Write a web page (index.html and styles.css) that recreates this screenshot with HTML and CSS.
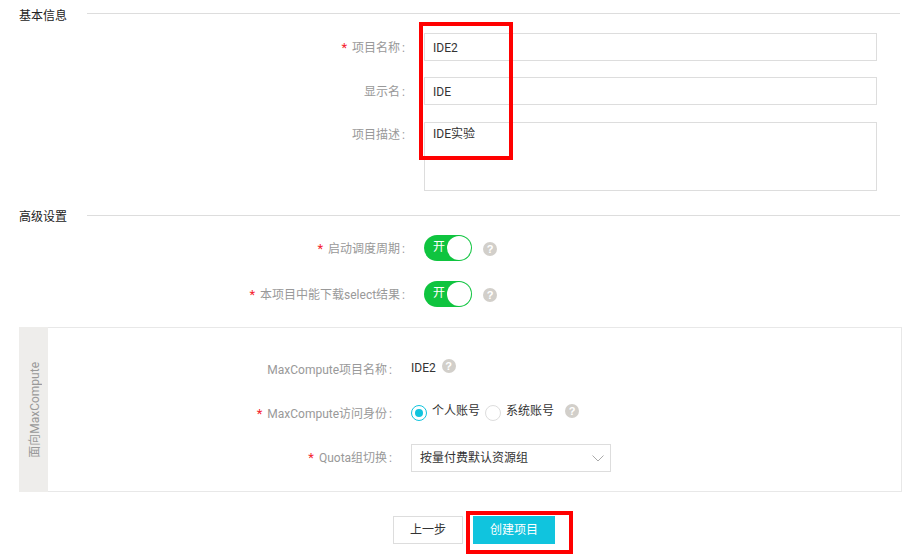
FILE: index.html
```html
<!DOCTYPE html>
<html lang="zh">
<head>
<meta charset="utf-8">
<title>创建项目</title>
<link rel="stylesheet" href="styles.css">
</head>
<body>
<main class="page">
  <div class="section-head first"><h2>基本信息</h2><span class="rule"></span></div>
  <div class="form-row"><label class="label"><i>*</i>项目名称 :</label><div class="input">IDE2</div></div>
  <div class="form-row"><label class="label">显示名 :</label><div class="input">IDE</div></div>
  <div class="form-row top"><label class="label">项目描述 :</label><div class="input area">IDE实验</div></div>

  <div class="section-head second"><h2>高级设置</h2><span class="rule"></span></div>
  <div class="form-row switch-row"><label class="label"><i>*</i>启动调度周期 :</label>
    <div class="switch"><span>开</span><b></b></div>
    <span class="help">?</span></div>
  <div class="form-row switch-row"><label class="label"><i>*</i>本项目中能下载select结果 :</label>
    <div class="switch"><span>开</span><b></b></div>
    <span class="help">?</span></div>

  <section class="panel">
    <div class="panel-side"><span>面向MaxCompute</span></div>
    <div class="panel-body">
      <div class="p-row"><label class="p-label">MaxCompute项目名称 :</label><span class="value">IDE2</span><span class="help small">?</span></div>
      <div class="p-row"><label class="p-label"><i>*</i>MaxCompute访问身份 :</label>
        <span class="radio on"></span><span class="radio-text">个人账号</span>
        <span class="radio"></span><span class="radio-text">系统账号</span>
        <span class="help small far">?</span></div>
      <div class="p-row"><label class="p-label"><i>*</i>Quota组切换 :</label>
        <div class="select">按量付费默认资源组
          <svg width="12" height="7" viewBox="0 0 12 7"><path d="M.5.5 6 6 11.5.5" fill="none" stroke="#aaa"/></svg>
        </div></div>
    </div>
  </section>

  <div class="actions"><button class="btn">上一步</button><button class="btn primary">创建项目</button></div>
</main>
<div class="mark mark-a"></div>
<div class="mark mark-b"></div>
</body>
</html>
```
FILE: styles.css
```css
* { box-sizing: border-box; }
html, body { margin: 0; padding: 0; background: #fff; }
body { width: 921px; height: 556px; overflow: hidden; position: relative;
  font: 12px/18px Roboto, "Noto Sans CJK SC", sans-serif; color: #333; }
i { color: #f5222d; font-style: normal; margin-right: 5px; font-size: 13px; }

.section-head { display: flex; align-items: flex-start; padding-left: 19px; width: 900px; }
.section-head h2 { margin: 0; width: 68px; font-size: 12px; font-weight: 400; color: #222; line-height: 18px; }
.section-head .rule { flex: 1; height: 1px; background: #ddd; }
.section-head.first { padding-top: 7px; margin-bottom: 8px; }
.section-head.first .rule { margin-top: 6px; }
.section-head.second { margin-top: 17px; margin-bottom: 9px; }
.section-head.second .rule { margin-top: 7px; }

.form-row { display: flex; align-items: center; margin-bottom: 16px; }
.form-row.top { align-items: flex-start; margin-top: 17px; margin-bottom: 0; }
.label { width: 405px; text-align: right; color: #999; flex: none; margin-right: 19px; white-space: nowrap; padding-top: 2px; word-spacing: -1px; }
.form-row.top .label { padding-top: 4px; }
.input { width: 453px; height: 28px; border: 1px solid #ddd; padding: 5px 8px 0; color: #333; line-height: 18px; }
.input.area { height: 69px; padding-top: 2px; }

.switch-row { margin-bottom: 20px; height: 26px; }
.switch { position: relative; width: 48px; height: 26px; border-radius: 13px; background: #0fc43f; color: #fff; line-height: 24px; padding-left: 9px; flex: none; }
.switch b { position: absolute; right: 1px; top: 1px; width: 24px; height: 24px; border-radius: 50%; background: #fff; }
.help { display: inline-block; width: 14px; height: 14px; border-radius: 50%; background: #d2cfca; color: #fff; font: 700 11px/14px "Liberation Sans", sans-serif; text-align: center; margin-left: 11px; margin-top: 2px; flex: none; }

.panel { display: flex; width: 883px; height: 165px; margin: 0 0 0 19px; border: 1px solid #e8e8e8; border-left: 0; }
.panel-side { width: 29px; background: #eeedeb; display: flex; align-items: center; justify-content: center; margin-top: -1px; margin-bottom: -1px; }
.panel-side span { writing-mode: vertical-rl; text-orientation: sideways; transform: rotate(180deg); color: #999; font-size: 12px; line-height: 18px; white-space: nowrap; position: relative; left: 1px; }
.panel-body { flex: 1; padding-top: 28px; }
.p-row { display: flex; align-items: center; height: 28px; margin-bottom: 16px; }
.p-label { width: 344px; text-align: right; color: #999; margin-right: 19px; white-space: nowrap; flex: none; word-spacing: -1px; }
.value { margin-top: -4px; }
.help.small { margin-left: 6px; margin-top: -9px; }
.help.far { margin-left: 6px; margin-top: -7px; }
.radio { width: 16px; height: 16px; border-radius: 50%; border: 1px solid #ddd; flex: none; position: relative; margin-top: -2px; }
.radio.on { border-color: #10c4de; }
.radio.on::after { content: ""; position: absolute; left: 3px; top: 3px; width: 8px; height: 8px; border-radius: 50%; background: #10c4de; }
.radio-text { margin: -6px 5px 0 5px; }
.select { width: 200px; height: 28px; border: 1px solid #ddd; padding: 0 6px 0 8px; display: flex; align-items: center; justify-content: space-between; }

.actions { display: flex; justify-content: flex-start; gap: 10px; padding: 24px 0 0 393px; }
.btn { height: 28px; width: 70px; border: 1px solid #ddd; background: #fff; color: #333; font: inherit; padding: 0; }
.btn.primary { width: 82px; background: #10c4de; border-color: #10c4de; color: #fff; }

.mark { position: absolute; border: 4px solid #f00; }
.mark-a { left: 419px; top: 22px; width: 94px; height: 138px; }
.mark-b { left: 466px; top: 511px; width: 107px; height: 43px; }
```
